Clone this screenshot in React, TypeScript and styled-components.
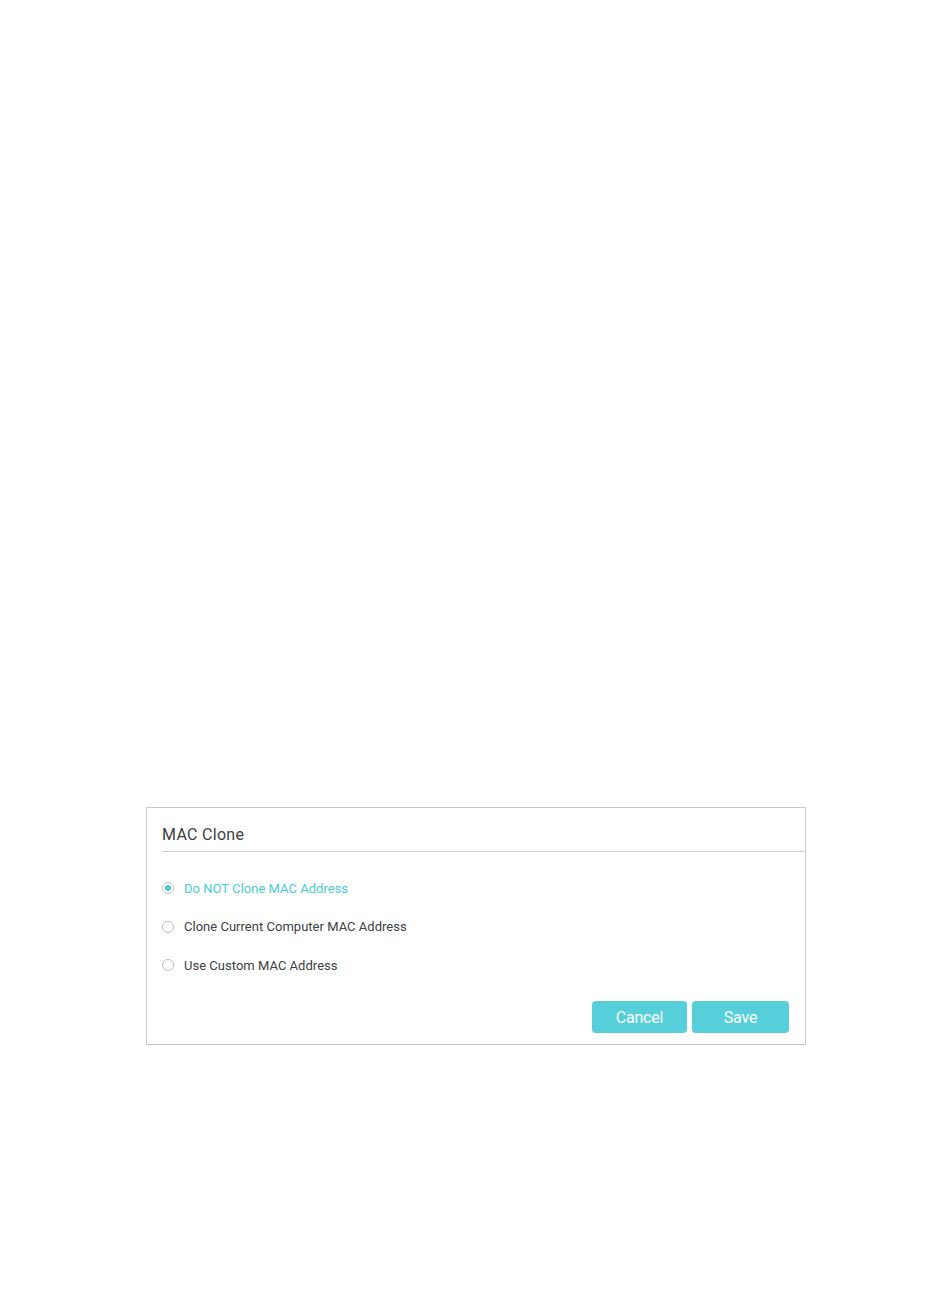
import React, { useState } from "react";
import styled, { createGlobalStyle } from "styled-components";

const GlobalStyle = createGlobalStyle`
  html, body {
    margin: 0;
    padding: 0;
    background: #ffffff;
    font-family: Roboto, "Liberation Sans", Arial, sans-serif;
  }
`;

const Page = styled.div`
  width: 950px;
  height: 1315px;
  padding-top: 807px;
  box-sizing: border-box;
  display: flex;
  justify-content: flex-start;
`;

const Panel = styled.div`
  margin-left: 146px;
  width: 660px;
  height: 238px;
  box-sizing: border-box;
  border: 1px solid #c8c8c8;
  display: flex;
  flex-direction: column;
`;

const Header = styled.div`
  margin-left: 15px;
  height: 44px;
  border-bottom: 1px solid #cfcfcf;
  display: flex;
  align-items: center;
  padding-top: 10px;
  box-sizing: border-box;
  font-size: 16px;
  letter-spacing: 0.3px;
  color: #3d4043;
`;

const Options = styled.div`
  display: flex;
  flex-direction: column;
  gap: 18.5px;
  padding: 26px 0 0 15px;
`;

const Option = styled.label<{ $checked: boolean }>`
  display: flex;
  align-items: center;
  gap: 10px;
  height: 20px;
  font-size: 13px;
  letter-spacing: 0.02px;
  cursor: pointer;
  color: ${({ $checked }) => ($checked ? "#4acbd6" : "#3d4043")};
`;

const Radio = styled.span<{ $checked: boolean }>`
  width: 12px;
  height: 12px;
  box-sizing: border-box;
  border-radius: 50%;
  border: 1px solid #bdbdbd;
  display: flex;
  align-items: center;
  justify-content: center;
  background: #fff;
  &::after {
    content: "";
    width: 6px;
    height: 6px;
    border-radius: 50%;
    background: ${({ $checked }) => ($checked ? "#4acbd6" : "transparent")};
  }
`;

const Footer = styled.div`
  margin-top: auto;
  display: flex;
  justify-content: flex-end;
  gap: 5px;
  padding: 0 16px 11px 0;
`;

const Button = styled.button<{ $w: number }>`
  width: ${({ $w }) => $w}px;
  height: 32px;
  border: none;
  border-radius: 4px;
  background: #56cfdb;
  color: #ffffff;
  font-family: Roboto, "Liberation Sans", Arial, sans-serif;
  font-size: 16px;
  letter-spacing: -0.2px;
  cursor: pointer;
`;

const options = [
  { id: "none", label: "Do NOT Clone MAC Address" },
  { id: "current", label: "Clone Current Computer MAC Address" },
  { id: "custom", label: "Use Custom MAC Address" },
];

const App = () => {
  const [mode, setMode] = useState("none");
  return (
    <>
      <GlobalStyle />
      <Page>
        <Panel>
          <Header>MAC Clone</Header>
          <Options>
            {options.map((o) => (
              <Option key={o.id} $checked={mode === o.id} onClick={() => setMode(o.id)}>
                <Radio $checked={mode === o.id} />
                {o.label}
              </Option>
            ))}
          </Options>
          <Footer>
            <Button $w={95}>Cancel</Button>
            <Button $w={97}>Save</Button>
          </Footer>
        </Panel>
      </Page>
    </>
  );
};

export default App;
